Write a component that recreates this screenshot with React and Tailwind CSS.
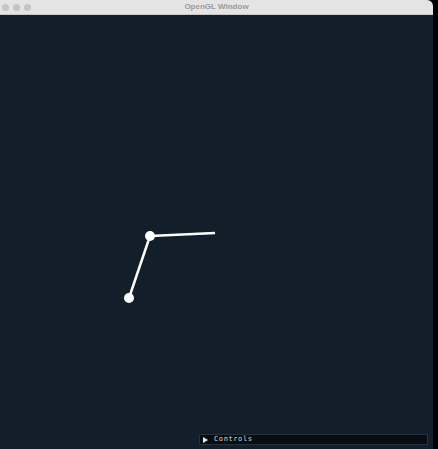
const App = () => {
  return (
    <div className="w-[438px] h-[449px] bg-black flex overflow-hidden">
      <div className="w-[433px] h-full flex flex-col rounded-tr-[6px] overflow-hidden bg-[#121e29]">
        <div className="h-[15px] shrink-0 bg-[#e4e4e4] border-b border-[#c8c8c8] relative flex items-center">
          <div className="flex gap-[4px] pl-[2px]">
            <span className="w-[7px] h-[7px] rounded-full bg-[#c4c4c4]" />
            <span className="w-[7px] h-[7px] rounded-full bg-[#c4c4c4]" />
            <span className="w-[7px] h-[7px] rounded-full bg-[#c4c4c4]" />
          </div>
          <div className="absolute inset-0 flex items-center justify-center text-[8px] font-bold text-[#9a9a9a] font-['Liberation_Sans',sans-serif]">
            OpenGL Window
          </div>
        </div>
        <div className="flex-1 relative">
          <svg className="absolute inset-0" width="433" height="434" viewBox="0 15 433 434">
            <line x1="150" y1="236" x2="215" y2="233" stroke="#ffffff" strokeWidth="2.5" />
            <line x1="150" y1="236" x2="129" y2="298" stroke="#ffffff" strokeWidth="2.5" />
            <circle cx="150" cy="236" r="5" fill="#ffffff" />
            <circle cx="129" cy="298" r="5" fill="#ffffff" />
          </svg>
          <div className="absolute left-[199px] top-[419px] w-[229px] h-[11px] bg-[#070d12] border border-[#26313a] flex items-center gap-[6px] pl-[3px]">
            <svg width="5" height="6" viewBox="0 0 5 6">
              <path d="M0 0 L5 3 L0 6 Z" fill="#e8e8e8" />
            </svg>
            <span className="text-[7px] leading-none tracking-[0.6px] text-[#dcdcdc] font-['DejaVu_Sans_Mono',monospace]">Controls</span>
          </div>
        </div>
      </div>
    </div>
  );
};

export default App;
